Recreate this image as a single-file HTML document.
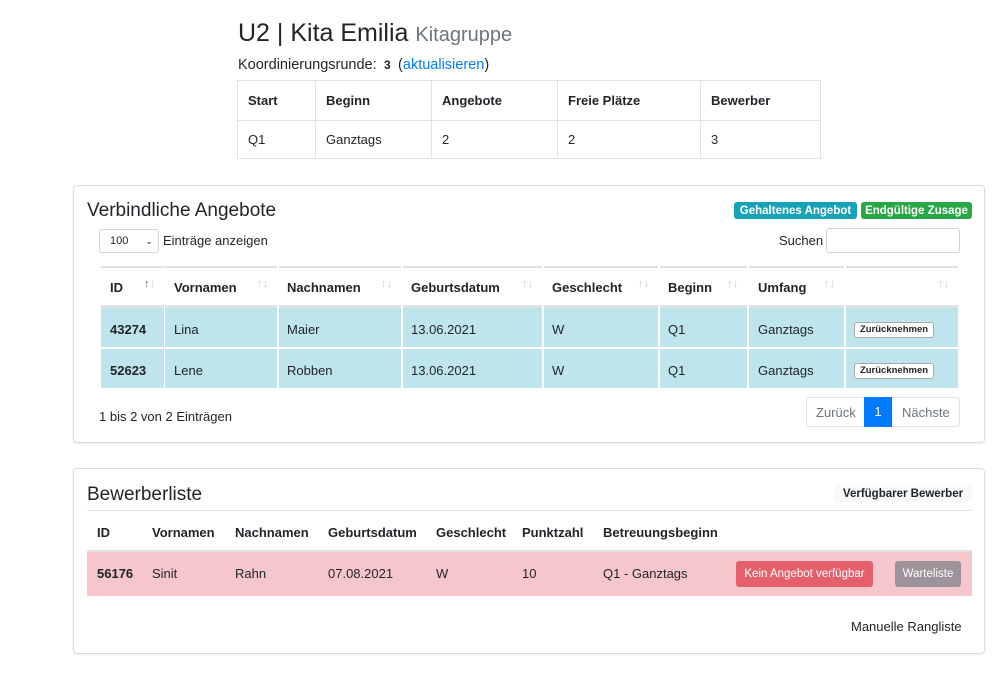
<!DOCTYPE html>
<html><head><meta charset="utf-8"><style>
*{box-sizing:border-box;margin:0;padding:0}
body{width:1002px;height:675px;background:#fff;font-family:"Liberation Sans",sans-serif;color:#212529;position:relative;overflow:hidden;font-size:13px}
.a{position:absolute;white-space:nowrap}
table{border-collapse:collapse;position:absolute}
.card{position:absolute;border:1px solid #dcdcdc;border-radius:4px;box-shadow:0 1px 2px rgba(0,0,0,.08)}
.badge{position:absolute;color:#fff;font-weight:bold;font-size:11.5px;border-radius:3px;text-align:center;line-height:18px;height:17px}
.th{font-weight:bold}
.arr{position:absolute;color:#c8ccd0;font-size:11px}
</style></head><body>
<div class="a" style="left:238px;top:19px;font-size:25px">U2 | Kita Emilia <span style="font-size:20px;color:#6c757d">Kitagruppe</span></div>
<div class="a" style="left:238px;top:57px;font-size:14.5px">Koordinierungsrunde: <b style="font-size:12px">&nbsp;3&nbsp;</b> (<span style="color:#007bff">aktualisieren</span>)</div>
<table style="left:237px;top:80px;width:584px;font-size:13px">
<tr style="height:40px"><td style="width:78px;border:1px solid #dee2e6;padding-left:10px;font-weight:bold">Start</td><td style="width:116px;border:1px solid #dee2e6;padding-left:10px;font-weight:bold">Beginn</td><td style="width:126px;border:1px solid #dee2e6;padding-left:10px;font-weight:bold">Angebote</td><td style="width:143px;border:1px solid #dee2e6;padding-left:10px;font-weight:bold">Freie Plätze</td><td style="border:1px solid #dee2e6;padding-left:10px;font-weight:bold">Bewerber</td></tr>
<tr style="height:38px"><td style="border:1px solid #dee2e6;padding-left:10px">Q1</td><td style="border:1px solid #dee2e6;padding-left:10px">Ganztags</td><td style="border:1px solid #dee2e6;padding-left:10px">2</td><td style="border:1px solid #dee2e6;padding-left:10px">2</td><td style="border:1px solid #dee2e6;padding-left:10px">3</td></tr>
</table>

<div class="card" style="left:73px;top:185px;width:912px;height:258px"></div>
<div class="a" style="left:87px;top:200px;font-size:19px">Verbindliche Angebote</div>
<div class="badge" style="left:734px;top:202px;width:123px;background:#17a2b8">Gehaltenes Angebot</div>
<div class="badge" style="left:861px;top:202px;width:111px;background:#28a745">Endgültige Zusage</div>
<div class="a" style="left:99px;top:229px;width:60px;height:24px;border:1px solid #ced4da;border-radius:3px;font-size:11px;padding:5px 0 0 10px">100 <span style="margin-left:14px;font-size:9px">⌄</span></div>
<div class="a" style="left:163px;top:233px">Einträge anzeigen</div>
<div class="a" style="left:779px;top:233px">Suchen</div>
<div class="a" style="left:826px;top:228px;width:134px;height:25px;border:1px solid #ced4da;border-radius:3px"></div>
<div class="a" style="left:101px;top:266px;width:857px;height:2px;background:#dee2e6"></div>
<div class="a" style="left:101px;top:305px;width:857px;height:3px;background:#dee2e6"></div>
<div class="a" style="left:101px;top:308px;width:857px;height:80px;background:#bee5eb"></div>
<div class="a" style="left:101px;top:347px;width:857px;height:2px;background:#fff"></div>
<div class="a th" style="left:110px;top:280px">ID</div>
<div class="a th" style="left:174px;top:280px">Vornamen</div>
<div class="a th" style="left:287px;top:280px">Nachnamen</div>
<div class="a th" style="left:411px;top:280px">Geburtsdatum</div>
<div class="a th" style="left:552px;top:280px">Geschlecht</div>
<div class="a th" style="left:668px;top:280px">Beginn</div>
<div class="a th" style="left:758px;top:280px">Umfang</div>
<div class="arr" style="left:144px;top:278px;color:#666">↑<span style="color:#c8ccd0">↓</span></div>
<div class="arr" style="left:257px;top:278px">↑↓</div>
<div class="arr" style="left:381px;top:278px">↑↓</div>
<div class="arr" style="left:522px;top:278px">↑↓</div>
<div class="arr" style="left:638px;top:278px">↑↓</div>
<div class="arr" style="left:727px;top:278px">↑↓</div>
<div class="arr" style="left:824px;top:278px">↑↓</div>
<div class="arr" style="left:938px;top:278px">↑↓</div>
<div class="a" style="left:164px;top:266px;width:1px;height:122px;background:#fff"></div>
<div class="a" style="left:277px;top:266px;width:2px;height:122px;background:#fff"></div>
<div class="a" style="left:401px;top:266px;width:2px;height:122px;background:#fff"></div>
<div class="a" style="left:542px;top:266px;width:2px;height:122px;background:#fff"></div>
<div class="a" style="left:658px;top:266px;width:2px;height:122px;background:#fff"></div>
<div class="a" style="left:747px;top:266px;width:2px;height:122px;background:#fff"></div>
<div class="a" style="left:844px;top:266px;width:2px;height:122px;background:#fff"></div>
<div class="a th" style="left:110px;top:322px">43274</div>
<div class="a" style="left:174px;top:322px">Lina</div>
<div class="a" style="left:287px;top:322px">Maier</div>
<div class="a" style="left:411px;top:322px">13.06.2021</div>
<div class="a" style="left:552px;top:322px">W</div>
<div class="a" style="left:668px;top:322px">Q1</div>
<div class="a" style="left:758px;top:322px">Ganztags</div>
<div class="a" style="left:854px;top:322px;width:80px;height:16px;background:#fff;border:1px solid #aaa;border-radius:3px;font-size:9.5px;font-weight:bold;text-align:center;line-height:14px">Zurücknehmen</div>
<div class="a th" style="left:110px;top:363px">52623</div>
<div class="a" style="left:174px;top:363px">Lene</div>
<div class="a" style="left:287px;top:363px">Robben</div>
<div class="a" style="left:411px;top:363px">13.06.2021</div>
<div class="a" style="left:552px;top:363px">W</div>
<div class="a" style="left:668px;top:363px">Q1</div>
<div class="a" style="left:758px;top:363px">Ganztags</div>
<div class="a" style="left:854px;top:363px;width:80px;height:16px;background:#fff;border:1px solid #aaa;border-radius:3px;font-size:9.5px;font-weight:bold;text-align:center;line-height:14px">Zurücknehmen</div>
<div class="a" style="left:99px;top:409px">1 bis 2 von 2 Einträgen</div>
<div class="a" style="left:806px;top:397px;width:154px;height:30px;border:1px solid #dee2e6;border-radius:3px;color:#6c757d"><span class="a" style="left:9px;top:7px">Zurück</span><span class="a" style="left:57px;top:-1px;width:28px;height:30px;background:#007bff;color:#fff;text-align:center;line-height:30px">1</span><span class="a" style="left:95px;top:7px">Nächste</span></div>

<div class="card" style="left:73px;top:468px;width:912px;height:186px"></div>
<div class="a" style="left:87px;top:484px;font-size:19px">Bewerberliste</div>
<div class="badge" style="left:834px;top:485px;width:138px;background:#f8f9fa;color:#212529">Verfügbarer Bewerber</div>
<div class="a" style="left:87px;top:510px;width:885px;height:1px;background:#dee2e6"></div>
<div class="a th" style="left:97px;top:525px">ID</div>
<div class="a th" style="left:152px;top:525px">Vornamen</div>
<div class="a th" style="left:235px;top:525px">Nachnamen</div>
<div class="a th" style="left:328px;top:525px">Geburtsdatum</div>
<div class="a th" style="left:436px;top:525px">Geschlecht</div>
<div class="a th" style="left:522px;top:525px">Punktzahl</div>
<div class="a th" style="left:603px;top:525px">Betreuungsbeginn</div>
<div class="a" style="left:87px;top:550px;width:885px;height:2px;background:#dee2e6"></div>
<div class="a" style="left:87px;top:552px;width:885px;height:44px;background:#f5c6cb"></div>
<div class="a th" style="left:97px;top:566px">56176</div>
<div class="a" style="left:152px;top:566px">Sinit</div>
<div class="a" style="left:235px;top:566px">Rahn</div>
<div class="a" style="left:328px;top:566px">07.08.2021</div>
<div class="a" style="left:436px;top:566px">W</div>
<div class="a" style="left:522px;top:566px">10</div>
<div class="a" style="left:603px;top:566px">Q1 - Ganztags</div>
<div class="a" style="left:736px;top:561px;width:137px;height:26px;background:#e4606d;color:#fff;border-radius:3px;font-size:11.5px;text-align:center;line-height:26px">Kein Angebot verfügbar</div>
<div class="a" style="left:895px;top:561px;width:66px;height:26px;background:#9c949a;color:#fff;border-radius:3px;font-size:11.5px;text-align:center;line-height:26px">Warteliste</div>
<div class="a" style="left:851px;top:619px">Manuelle Rangliste</div>
</body></html>
